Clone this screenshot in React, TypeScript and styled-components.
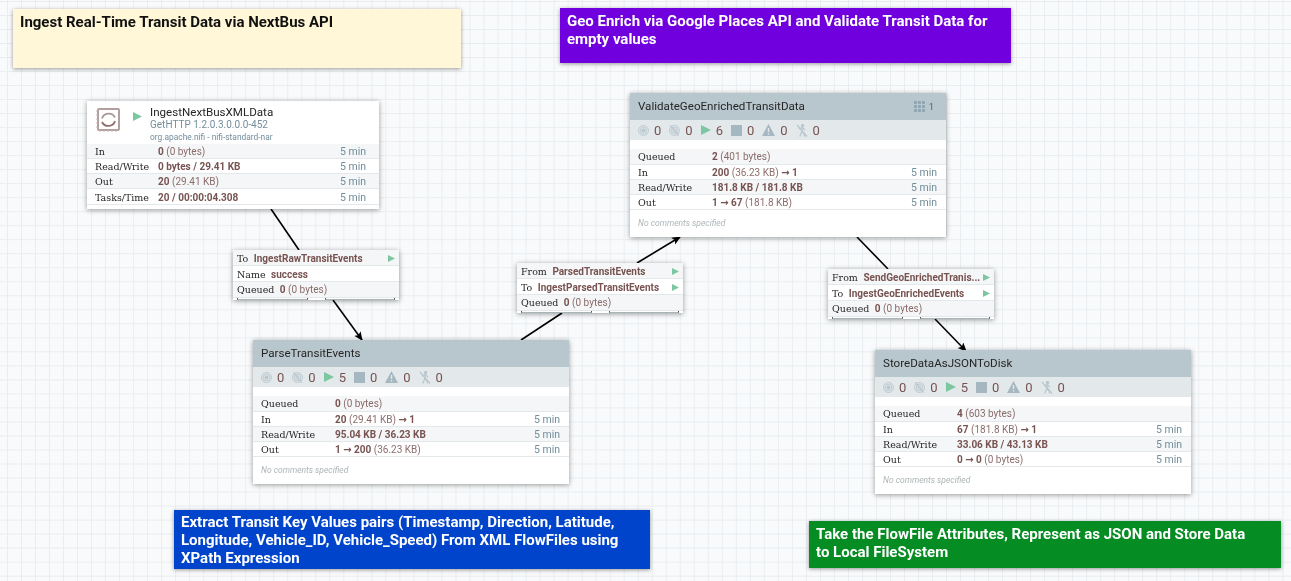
import React from 'react';
import styled, { createGlobalStyle } from 'styled-components';

const GlobalStyle = createGlobalStyle`
  html, body {
    margin: 0;
    padding: 0;
    background: #f9fafb;
    font-family: Roboto, "Liberation Sans", sans-serif;
  }
`;

const Canvas = styled.div`
  position: relative;
  width: 1291px;
  height: 581px;
  overflow: hidden;
  background-color: #f9fafb;
  background-image:
    linear-gradient(to right, #e8edf0 1px, transparent 1px),
    linear-gradient(to bottom, #e8edf0 1px, transparent 1px);
  background-size: 14.03px 14.03px;
  background-position: 7px 1px;
  filter: blur(0.35px);
`;

const Links = styled.svg`
  position: absolute;
  inset: 0;
`;

const Note = styled.div<{ $x: number; $y: number; $w: number; $h: number; $bg: string; $fg: string; $top?: number }>`
  position: absolute;
  left: ${p => p.$x}px;
  top: ${p => p.$y}px;
  width: ${p => p.$w}px;
  height: ${p => p.$h}px;
  box-sizing: border-box;
  padding: ${p => p.$top ?? 4}px 7px 0;
  background: ${p => p.$bg};
  color: ${p => p.$fg};
  font-size: 15px;
  font-weight: 700;
  line-height: 18px;
  box-shadow: 0 1px 4px rgba(0, 0, 0, 0.4);
`;

const Card = styled.div<{ $x: number; $y: number; $w: number; $h: number }>`
  position: absolute;
  left: ${p => p.$x}px;
  top: ${p => p.$y}px;
  width: ${p => p.$w}px;
  height: ${p => p.$h}px;
  background: #fff;
  box-shadow: 0 1px 5px rgba(0, 0, 0, 0.4);
`;

const ProcessorHead = styled.div`
  height: 42.6px;
  display: flex;
  box-sizing: border-box;
`;

const ProcessorIcon = styled.div`
  width: 37px;
  padding: 7px 0 0 9px;
  box-sizing: border-box;
  display: flex;
  align-items: flex-start;
`;

const RunState = styled.div`
  width: 26px;
  padding: 11px 0 0 9px;
  box-sizing: border-box;
  display: flex;
  align-items: flex-start;
`;

const ProcessorTitles = styled.div`
  padding-top: 4px;
  display: flex;
  flex-direction: column;
`;

const ProcessorName = styled.div`
  font-size: 11.6px;
  line-height: 14px;
  color: #262626;
`;

const ProcessorType = styled.div`
  font-size: 10px;
  line-height: 12px;
  color: #728e9b;
`;

const ProcessorBundle = styled.div`
  font-size: 8.4px;
  line-height: 12px;
  color: #728e9b;
`;

const GroupHead = styled.div`
  height: 27px;
  padding: 0 12px 1px 8px;
  box-sizing: border-box;
  background: #b8c6cd;
  display: flex;
  align-items: center;
  justify-content: space-between;
`;

const GroupTitle = styled.div`
  font-size: 11.6px;
  color: #262626;
`;

const Version = styled.div`
  display: flex;
  align-items: center;
  gap: 4px;
  font-size: 9.5px;
  color: #775351;
`;

const StatusBar = styled.div`
  height: 20px;
  background: #e3e8eb;
  display: flex;
  align-items: center;
  padding-left: 8px;
  gap: 8px;
  margin-bottom: 9.3px;
`;

const StatusItem = styled.div`
  display: flex;
  align-items: center;
  gap: 5px;
  font-size: 13px;
  color: #775351;
`;

const StatRow = styled.div<{ $shade: boolean; $right: number }>`
  height: 15.3px;
  display: flex;
  align-items: center;
  padding: 1px ${p => p.$right}px 0 8px;
  background: ${p => (p.$shade ? '#f4f6f7' : '#fff')};
  border-bottom: 1px solid #e3e8eb;
  box-sizing: border-box;
`;

const StatLabel = styled.div<{ $w: number }>`
  width: ${p => p.$w}px;
  flex-shrink: 0;
  font-family: "DejaVu Serif", "Liberation Serif", serif;
  font-size: 9.5px;
  color: #262626;
  white-space: nowrap;
`;

const StatValue = styled.div`
  flex: 1;
  font-family: Roboto, "DejaVu Sans", sans-serif;
  font-size: 10px;
  color: #775351;
  white-space: nowrap;

  b {
    font-weight: 700;
  }

  span {
    opacity: 0.85;
  }
`;

const StatAge = styled.div`
  font-size: 10.5px;
  color: #728e9b;
`;

const Comment = styled.div`
  padding: 8px 8px 0;
  font-size: 8.5px;
  font-style: italic;
  color: #aeb5b8;
`;

const LinkRow = styled.div<{ $shade: boolean }>`
  height: 16px;
  display: flex;
  align-items: center;
  padding: 1px 4px 0;
  gap: 5.5px;
  box-sizing: border-box;
  background: ${p => (p.$shade ? '#f4f6f7' : '#fff')};
  border-bottom: 1px solid #e3e8eb;

  &:nth-child(3) {
    padding-top: 0;
  }
`;

const LinkLabel = styled.div`
  font-family: "DejaVu Serif", "Liberation Serif", serif;
  font-size: 9.5px;
  color: #262626;
`;

const LinkValue = styled.div`
  flex: 1;
  min-width: 0;
  font-size: 10px;
  font-weight: 700;
  color: #775351;
  white-space: nowrap;

  span {
    font-weight: 400;
    opacity: 0.85;
  }
`;

const LinkBars = styled.div`
  height: 2px;
  margin: 0 4px;
  display: flex;
  gap: 17px;
`;

const LinkBar = styled.div`
  flex: 1;
  box-sizing: border-box;
  border-bottom: 1px solid #a9b4b9;
  border-left: 1px solid #555;
  border-right: 1px solid #555;
`;

const PlayShape = styled.svg`
  display: block;
  flex-shrink: 0;
`;

const Play = ({ size = 9 }: { size?: number }) => (
  <PlayShape width={size} height={size} viewBox="0 0 10 10">
    <polygon points="0,0 10,5 0,10" fill="#7dc7a0" />
  </PlayShape>
);

const StatusIcons = {
  transmit: (
    <svg width="11" height="11" viewBox="0 0 12 12" fill="none" stroke="#b8c6cd">
      <circle cx="6" cy="6" r="5.4" />
      <circle cx="6" cy="6" r="3.5" />
      <circle cx="6" cy="6" r="1.7" fill="#b8c6cd" />
    </svg>
  ),
  remote: (
    <svg width="11" height="11" viewBox="0 0 12 12" fill="none" stroke="#b8c6cd">
      <circle cx="6" cy="6" r="5.4" />
      <circle cx="6" cy="6" r="3.5" />
      <circle cx="6" cy="6" r="1.7" />
      <line x1="1.5" y1="0.5" x2="10.5" y2="11.5" strokeWidth="1.4" />
    </svg>
  ),
  stop: (
    <svg width="11" height="11" viewBox="0 0 10 10">
      <rect width="10" height="10" fill="#a5b7c0" />
    </svg>
  ),
  warn: (
    <svg width="13" height="12" viewBox="0 0 13 12">
      <path d="M6.5 0 L13 12 H0 Z M5.8 4 V8 H7.2 V4 Z M5.8 9 V10.4 H7.2 V9 Z" fill="#a5b7c0" fillRule="evenodd" />
    </svg>
  ),
  disabled: (
    <svg width="12" height="13" viewBox="0 0 12 13" fill="none" stroke="#b8c6cd" strokeWidth="1.2">
      <circle cx="6.6" cy="1.6" r="1.1" fill="#b8c6cd" />
      <path d="M6.3 3.5 L5.8 7.5 L8 9.5 L8.5 12.5 M5.8 7.5 L3.8 12.5 M3 5 L6.3 3.5 L9 6" />
      <line x1="1" y1="1" x2="11" y2="12.5" />
    </svg>
  ),
};

const GridIcon = () => (
  <svg width="11" height="11" viewBox="0 0 11 11" fill="#8fa5b0">
    {[0, 4, 8].flatMap(x =>
      [0, 4, 8].map(y => <rect key={`${x}-${y}`} x={x} y={y} width="3" height="3" rx="0.8" />),
    )}
  </svg>
);

const ChipIcon = () => (
  <svg width="24" height="25" viewBox="0 0 24 25" fill="none">
    <rect x="2" y="1" width="21" height="21" rx="1" stroke="#b39f9e" strokeWidth="2" />
    <path d="M0 3 H2 M0 7 H2 M0 11 H2 M0 15 H2 M0 19 H2" stroke="#c9baba" strokeWidth="1" />
    <path d="M4 24 V22 M8 24 V22 M12 24 V22 M16 24 V22 M20 24 V22" stroke="#c9baba" strokeWidth="1" />
    <path d="M6 10.5 A7 7 0 0 1 19 9.5" stroke="#a89a99" strokeWidth="1.8" />
    <path d="M19 13 A7 7 0 0 1 6 14" stroke="#8d6f6d" strokeWidth="1.8" />
  </svg>
);

type Stat = { label: string; value: React.ReactNode; age?: boolean };

const Stats = ({ rows, labelWidth, right }: { rows: Stat[]; labelWidth: number; right: number }) => (
  <>
    {rows.map((row, i) => (
      <StatRow key={row.label} $shade={i % 2 === 0} $right={right}>
        <StatLabel $w={labelWidth}>{row.label}</StatLabel>
        <StatValue>{row.value}</StatValue>
        {row.age !== false && <StatAge>5 min</StatAge>}
      </StatRow>
    ))}
  </>
);

type GroupProps = {
  x: number;
  y: number;
  title: string;
  running: number;
  version?: boolean;
  rows: Stat[];
};

const Group = ({ x, y, title, running, version, rows }: GroupProps) => (
  <Card $x={x} $y={y} $w={316} $h={144}>
    <GroupHead>
      <GroupTitle>{title}</GroupTitle>
      {version && (
        <Version>
          <GridIcon />1
        </Version>
      )}
    </GroupHead>
    <StatusBar>
      <StatusItem>{StatusIcons.transmit}0</StatusItem>
      <StatusItem>{StatusIcons.remote}0</StatusItem>
      <StatusItem><Play size={10} />{running}</StatusItem>
      <StatusItem>{StatusIcons.stop}0</StatusItem>
      <StatusItem>{StatusIcons.warn}0</StatusItem>
      <StatusItem>{StatusIcons.disabled}0</StatusItem>
    </StatusBar>
    <Stats rows={rows} labelWidth={74} right={9} />
    <Comment>No comments specified</Comment>
  </Card>
);

type LinkLine = { label: string; value: React.ReactNode; play?: boolean };

const Connection = ({ x, y, lines }: { x: number; y: number; lines: LinkLine[] }) => (
  <Card $x={x} $y={y} $w={166} $h={50}>
    {lines.map((line, i) => (
      <LinkRow key={line.label} $shade={i % 2 === 0}>
        <LinkLabel>{line.label}</LinkLabel>
        <LinkValue>{line.value}</LinkValue>
        {line.play && <Play size={7} />}
      </LinkRow>
    ))}
    <LinkBars>
      <LinkBar />
      <LinkBar />
    </LinkBars>
  </Card>
);

const queued = (
  <>
    0 <span>(0 bytes)</span>
  </>
);

const val = (bold: string, rest?: string, tail?: string) => (
  <>
    <b>{bold}</b>
    {rest && <span> {rest}</span>}
    {tail && <b> {tail}</b>}
  </>
);

const App: React.FC = () => (
  <Canvas>
    <GlobalStyle />
    <Links width="1291" height="581">
      <defs>
        <marker id="arrow" markerWidth="10" markerHeight="10" refX="8" refY="4" orient="auto" markerUnits="userSpaceOnUse">
          <path d="M0 0 L9 4 L0 8 L2 4 Z" fill="#000" />
        </marker>
      </defs>
      <g stroke="#000" strokeWidth="1.6">
        <line x1="271" y1="209" x2="299" y2="250" />
        <line x1="333" y1="300" x2="362" y2="340" markerEnd="url(#arrow)" />
        <line x1="521" y1="340" x2="562" y2="313" />
        <line x1="637" y1="263" x2="680" y2="237" markerEnd="url(#arrow)" />
        <line x1="857" y1="237" x2="888" y2="269" />
        <line x1="935" y1="319" x2="966" y2="351" markerEnd="url(#arrow)" />
      </g>
    </Links>

    <Note $x={13} $y={9} $w={448} $h={59} $bg="#fff7d7" $fg="#111">
      Ingest Real-Time Transit Data via NextBus API
    </Note>
    <Note $x={560} $y={8} $w={451} $h={55} $bg="#7000dd" $fg="#fff">
      Geo Enrich via Google Places API and Validate Transit Data for empty values
    </Note>
    <Note $x={174} $y={510} $w={476} $h={59} $bg="#0044cc" $fg="#fff" $top={3}>
      Extract Transit Key Values pairs (Timestamp, Direction, Latitude, Longitude, Vehicle_ID, Vehicle_Speed) From XML FlowFiles using XPath Expression
    </Note>
    <Note $x={809} $y={521} $w={472} $h={47} $bg="#058c22" $fg="#fff">
      Take the FlowFile Attributes, Represent as JSON and Store Data
      <br />
      to Local FileSystem
    </Note>

    <Card $x={87} $y={101} $w={292} $h={108}>
      <ProcessorHead>
        <ProcessorIcon><ChipIcon /></ProcessorIcon>
        <RunState><Play size={9} /></RunState>
        <ProcessorTitles>
          <ProcessorName>IngestNextBusXMLData</ProcessorName>
          <ProcessorType>GetHTTP 1.2.0.3.0.0.0-452</ProcessorType>
          <ProcessorBundle>org.apache.nifi - nifi-standard-nar</ProcessorBundle>
        </ProcessorTitles>
      </ProcessorHead>
      <Stats
        labelWidth={63}
        right={13}
        rows={[
          { label: 'In', value: val('0', '(0 bytes)') },
          { label: 'Read/Write', value: val('0 bytes / 29.41 KB') },
          { label: 'Out', value: val('20', '(29.41 KB)') },
          { label: 'Tasks/Time', value: val('20 / 00:00:04.308') },
        ]}
      />
    </Card>

    <Connection
      x={233}
      y={250}
      lines={[
        { label: 'To', value: 'IngestRawTransitEvents', play: true },
        { label: 'Name', value: 'success' },
        { label: 'Queued', value: queued },
      ]}
    />
    <Connection
      x={517}
      y={263}
      lines={[
        { label: 'From', value: 'ParsedTransitEvents', play: true },
        { label: 'To', value: 'IngestParsedTransitEvents', play: true },
        { label: 'Queued', value: queued },
      ]}
    />
    <Connection
      x={828}
      y={269}
      lines={[
        { label: 'From', value: 'SendGeoEnrichedTranis...', play: true },
        { label: 'To', value: 'IngestGeoEnrichedEvents', play: true },
        { label: 'Queued', value: queued },
      ]}
    />

    <Group
      x={253}
      y={340}
      title="ParseTransitEvents"
      running={5}
      rows={[
        { label: 'Queued', value: val('0', '(0 bytes)'), age: false },
        { label: 'In', value: val('20', '(29.41 KB)', '→ 1') },
        { label: 'Read/Write', value: val('95.04 KB / 36.23 KB') },
        { label: 'Out', value: val('1 → 200', '(36.23 KB)') },
      ]}
    />
    <Group
      x={630}
      y={93}
      title="ValidateGeoEnrichedTransitData"
      running={6}
      version
      rows={[
        { label: 'Queued', value: val('2', '(401 bytes)'), age: false },
        { label: 'In', value: val('200', '(36.23 KB)', '→ 1') },
        { label: 'Read/Write', value: val('181.8 KB / 181.8 KB') },
        { label: 'Out', value: val('1 → 67', '(181.8 KB)') },
      ]}
    />
    <Group
      x={875}
      y={350}
      title="StoreDataAsJSONToDisk"
      running={5}
      rows={[
        { label: 'Queued', value: val('4', '(603 bytes)'), age: false },
        { label: 'In', value: val('67', '(181.8 KB)', '→ 1') },
        { label: 'Read/Write', value: val('33.06 KB / 43.13 KB') },
        { label: 'Out', value: val('0 → 0', '(0 bytes)') },
      ]}
    />
  </Canvas>
);

export default App;
